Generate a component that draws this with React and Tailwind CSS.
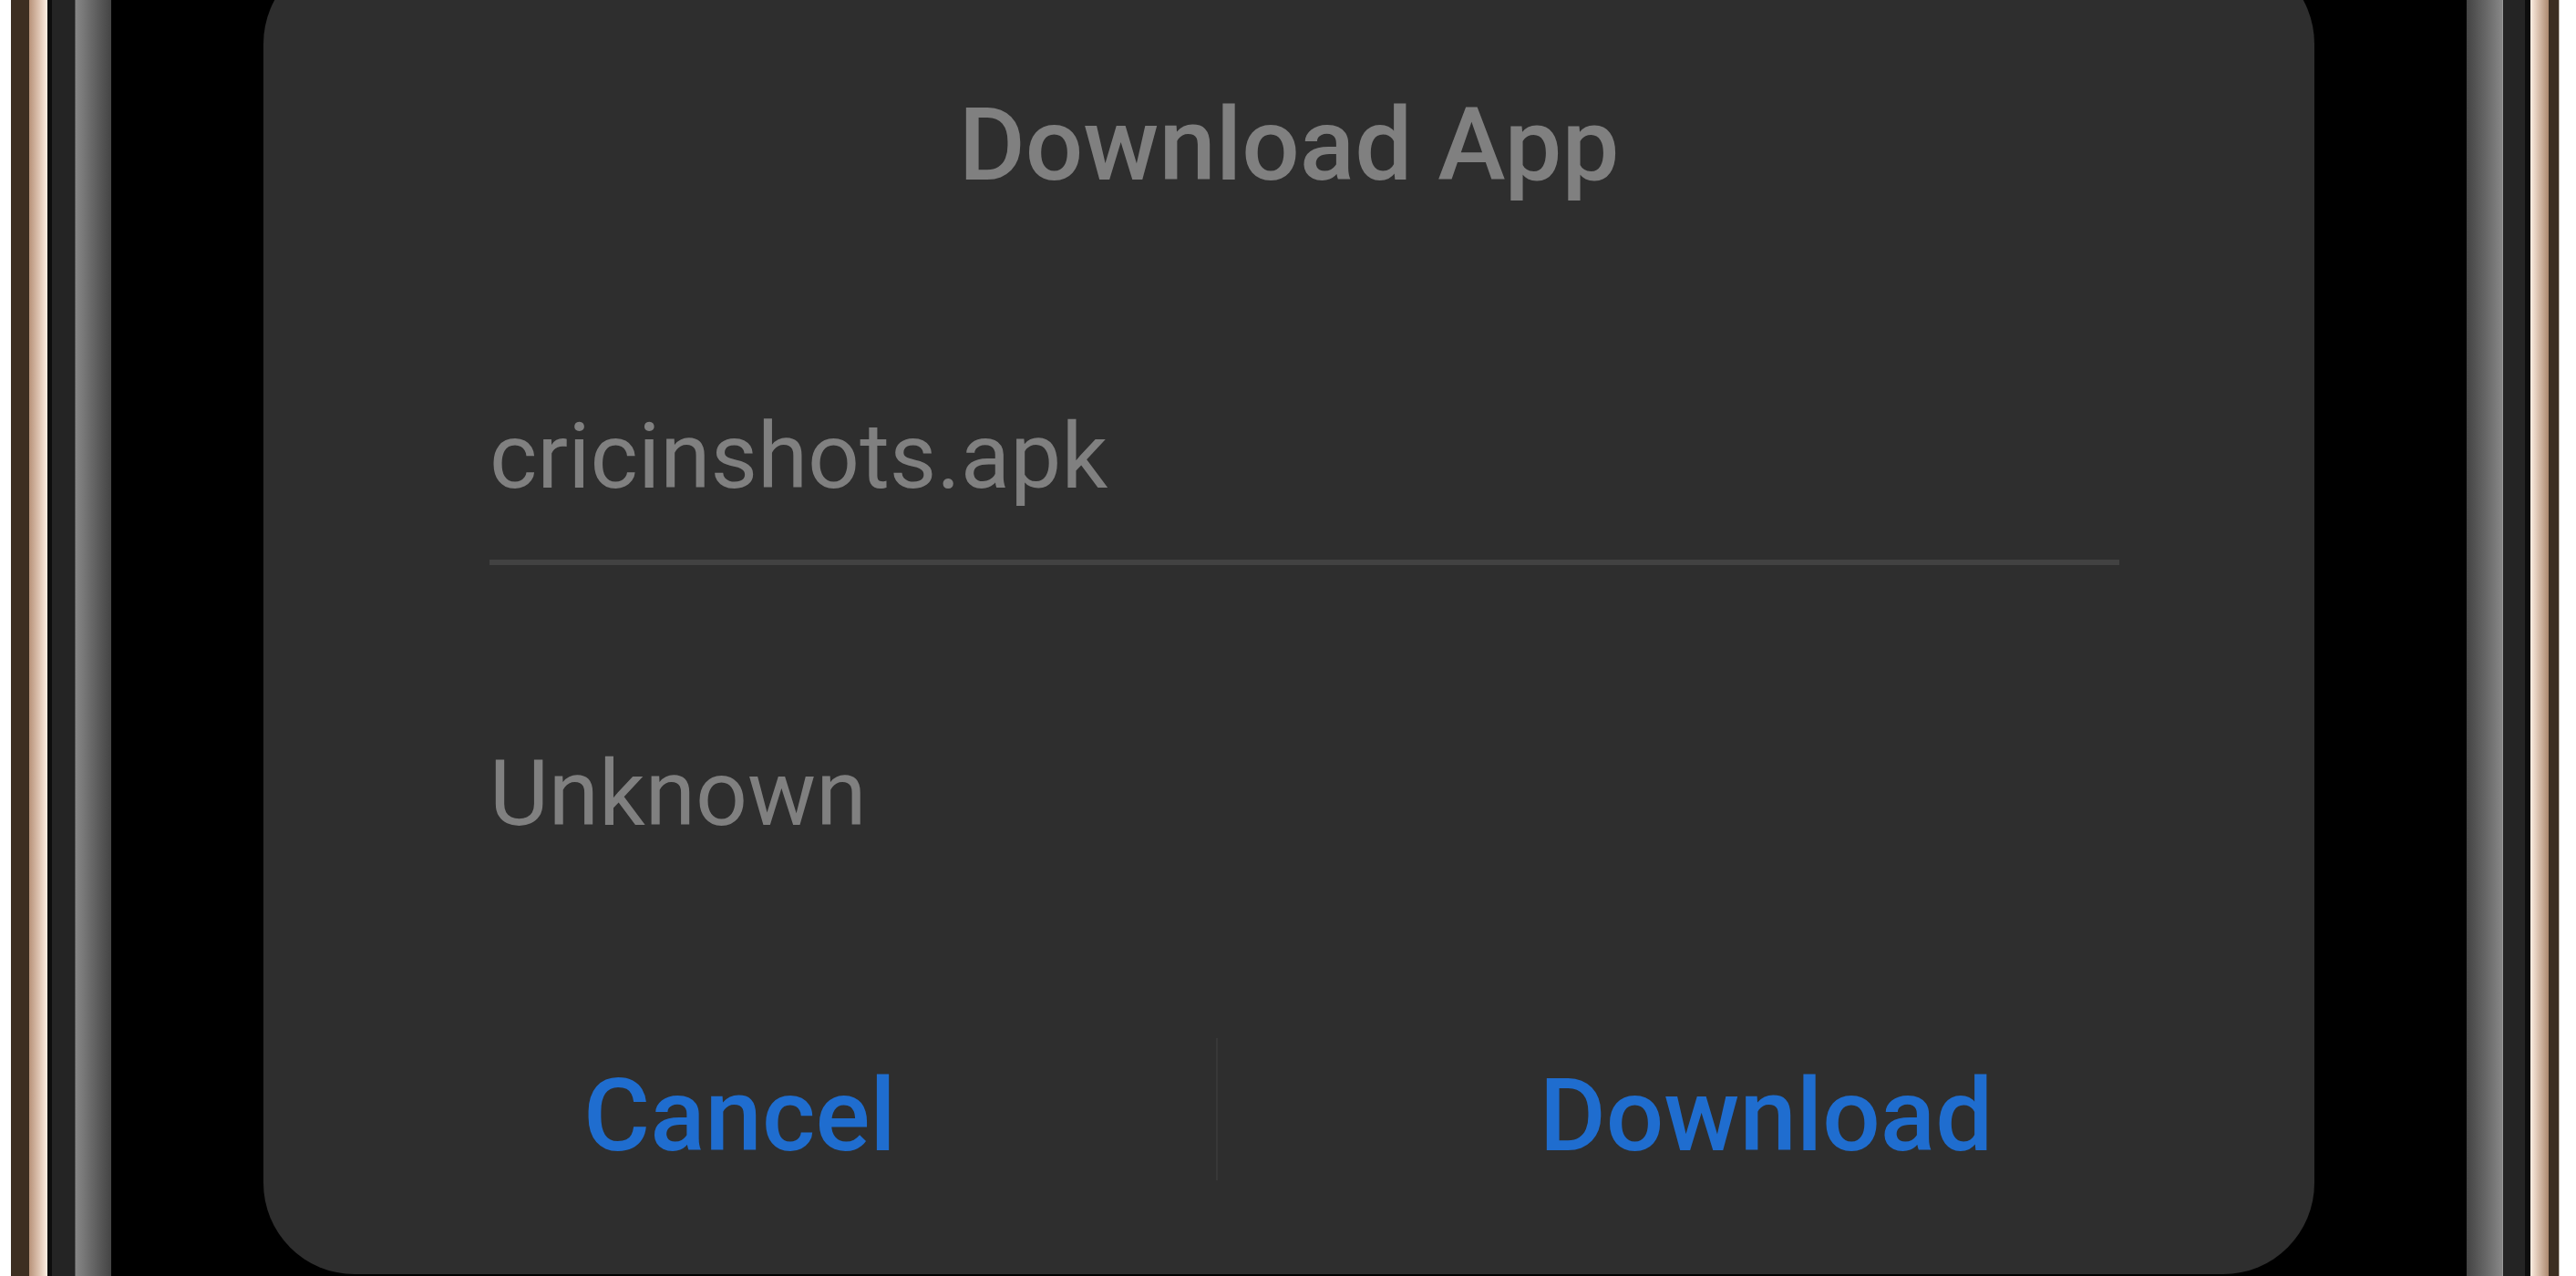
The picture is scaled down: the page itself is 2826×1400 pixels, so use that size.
import React from 'react';

// Dialog "Download App" shown inside a phone frame
function FrameEdge({ side }) {
  if (side === 'left') {
    return (
      <div className="flex h-full shrink-0">
        <div className="w-[12px] bg-white" />
        <div className="w-[20px] bg-[#3d2e21]" />
        <div className="w-[20px] bg-gradient-to-r from-[#b8937a] to-[#fdeee2]" />
        <div className="w-[5px] bg-[#0d0d0d]" />
        <div className="w-[25px] bg-[#242424]" />
        <div className="w-[40px] bg-gradient-to-r from-[#878787] to-[#444444] border-l border-[#5a5a5a]" />
      </div>
    );
  }
  return (
    <div className="flex h-full shrink-0">
      <div className="w-[40px] bg-gradient-to-r from-[#444444] to-[#878787] border-r border-[#9a9a9a]" />
      <div className="w-[24px] bg-[#242424]" />
      <div className="w-[6px] bg-[#0d0d0d]" />
      <div className="w-[20px] bg-gradient-to-r from-[#fdeee2] to-[#ad8a70]" />
      <div className="w-[12px] bg-[#3d2e21] border-r border-[#bdb5ac]" />
      <div className="w-[18px] bg-white" />
    </div>
  );
}

export default function App() {
  return (
    <div className="flex h-[1400px] w-[2826px] overflow-hidden bg-black font-['Roboto','Liberation_Sans',sans-serif]">
      <FrameEdge side="left" />

      <div className="flex-1 px-[167px]">
        <div className="-mt-[52px] rounded-[100px] bg-[#2e2e2e] pt-[155px] pb-[103px]">
          <h1 className="text-center text-[112px] font-medium leading-none text-[#808080]">
            Download App
          </h1>

          <div className="pl-[248px] pr-[214px]">
            <p className="mt-[236px] text-[100px] leading-none text-[#808080]">cricinshots.apk</p>
            <div className="mt-[63px] h-[6px] bg-[#424242]" />
            <p className="mt-[201px] text-[100px] leading-none text-[#808080]">Unknown</p>
          </div>

          <div className="mt-[218px] flex h-[156px] items-start">
            <button className="w-[1045px] shrink-0 pt-[29px] text-center text-[112px] font-medium leading-none text-[#1f6dcf]">
              Cancel
            </button>
            <div className="h-full w-[2px] bg-[#383838]" />
            <button className="flex-1 pt-[29px] text-center text-[112px] font-medium leading-none text-[#1f6dcf]">
              Download
            </button>
          </div>
        </div>
      </div>

      <FrameEdge side="right" />
    </div>
  );
}
